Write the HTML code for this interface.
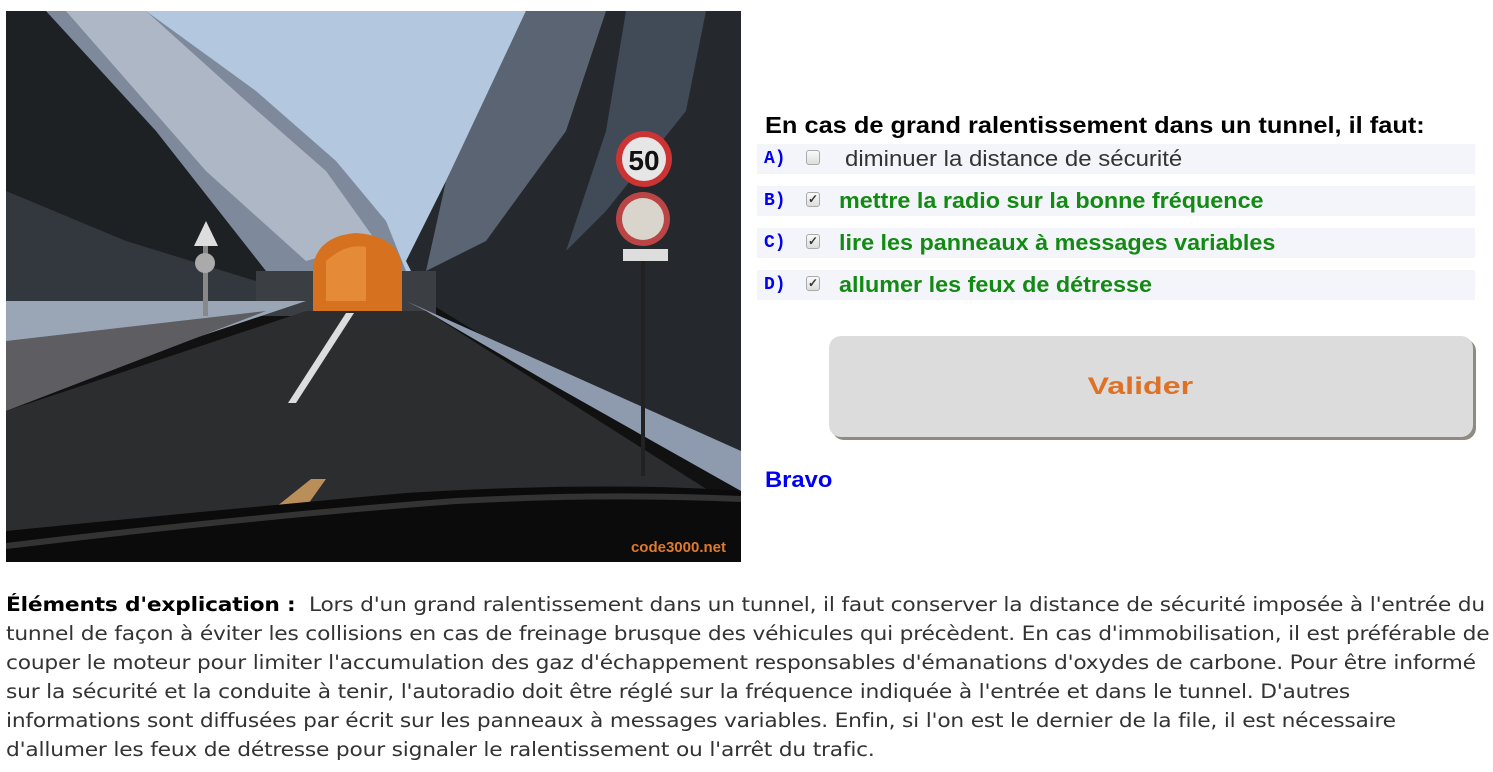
<!DOCTYPE html>
<html><head><meta charset="utf-8"><style>
body{margin:0;background:#fff;width:1493px;height:772px;position:relative;overflow:hidden;font-family:"DejaVu Sans Condensed","Liberation Sans",sans-serif}
.pic{position:absolute;left:6px;top:11px;width:735px;height:551px}
.sx{display:inline-block;transform-origin:left center}
.q{position:absolute;left:765px;top:112px;font:bold 23px "Liberation Sans",sans-serif;color:#000;white-space:nowrap}
.q .sx{transform:scaleX(1.103)}
.row{position:absolute;left:757px;width:718px;height:30px;background:#f4f5fa}
.lab{position:absolute;left:7px;top:5px;font:bold 18px "Liberation Mono",monospace;color:#0000ee}
.cb{position:absolute;left:49px;top:6px;width:14px;height:15px;border:1px solid #aaa;border-radius:3px;background:linear-gradient(#fafafa,#ddd);box-sizing:border-box;font:bold 12px sans-serif;color:#333;line-height:13px;text-align:center}
.t{position:absolute;left:82px;top:2px;font:bold 22px "Liberation Sans",sans-serif;color:#138a13;white-space:nowrap;transform:scaleX(1.062);transform-origin:left center}
.ta{left:88px;font-weight:normal;color:#333;transform:scaleX(1.09)}
.btn{position:absolute;left:829px;top:336px;width:622px;padding-right:22px;height:101px;background:#dcdcdc;border-radius:12px;box-shadow:3px 3px 0 #8f8a82;text-align:center;font:bold 24px/101px "Liberation Sans",sans-serif;color:#df7125}
.btn .sx{transform:scaleX(1.34);transform-origin:center}
.bravo{position:absolute;left:765px;top:467px;font:bold 22px "Liberation Sans",sans-serif;color:#0000f0;transform:scaleX(1.08);transform-origin:left}
.exp{position:absolute;left:6px;top:590px;width:1200px;font-size:19.3px;line-height:29px;color:#333;white-space:nowrap;letter-spacing:-0.15px;transform:scaleX(1.252);transform-origin:left top}
.exp b{color:#000}
</style></head><body>
<svg class="pic" viewBox="0 0 735 551" preserveAspectRatio="none">
<rect width="735" height="551" fill="#111"/>
<rect x="60" y="0" width="500" height="260" fill="#b3c7df"/>
<polygon points="30,0 140,0 250,80 330,150 380,210 400,260 250,280 150,200" fill="#7e8a9b"/>
<polygon points="60,0 140,0 240,90 320,160 370,230 300,250 200,160" fill="#aeb7c5"/>
<polygon points="0,0 40,0 150,120 260,260 250,300 0,300" fill="#1e2124"/>
<polygon points="0,180 120,230 250,270 250,300 0,300" fill="#33383f"/>
<polygon points="520,0 735,0 735,470 600,400 420,290 400,250 450,150" fill="#25282c"/>
<polygon points="520,0 600,0 560,120 480,230 420,260 440,170" fill="#5a6473"/>
<polygon points="620,0 700,0 680,100 600,200 560,240 600,120" fill="#414a57"/>
<rect x="250" y="260" width="180" height="45" fill="#3b3e43"/>
<path d="M307,300 V255 Q312,225 350,222 Q392,225 396,255 V300 Z" fill="#d5711f"/>
<path d="M320,290 V250 Q340,232 360,236 V290Z" fill="#e58a37"/>
<polygon points="0,290 300,290 150,340 0,360" fill="#9aa6b6"/>
<polygon points="0,330 260,300 0,400" fill="#5d5d62"/>
<polygon points="400,290 735,440 735,480 540,370 420,300" fill="#8e9bae"/>
<polygon points="0,400 300,300 420,300 735,500 735,551 0,551" fill="#2c2d2f"/>
<polygon points="340,302 348,302 290,392 282,392" fill="#ddd"/>
<polygon points="305,468 320,468 290,510 240,520" fill="#b98e58"/>
<path d="M0,560 L0,520 Q200,500 400,482 Q600,470 735,480 V551Z" fill="#0b0b0c"/>
<path d="M0,535 Q250,505 450,490 Q600,482 735,488" stroke="#333" stroke-width="6" fill="none"/>
<circle cx="638" cy="148" r="28" fill="#c33"/><circle cx="638" cy="148" r="22" fill="#e6e6e6"/>
<text x="638" y="159" font-family="Liberation Sans" font-weight="bold" font-size="28" text-anchor="middle" fill="#111">50</text>
<circle cx="637" cy="208" r="27" fill="#b44"/><circle cx="637" cy="208" r="21" fill="#d9d4cc"/>
<rect x="617" y="238" width="45" height="12" fill="#ddd"/>
<rect x="635" y="250" width="4" height="215" fill="#222"/>
<polygon points="200,210 212,235 188,235" fill="#ddd"/><rect x="197" y="235" width="5" height="70" fill="#888"/><circle cx="199" cy="252" r="10" fill="#aaa"/>
<text x="720" y="541" font-family="Liberation Sans" font-weight="bold" font-size="15" text-anchor="end" fill="#e07a2a">code3000.net</text>
</svg>
<div class="q"><span class="sx">En cas de grand ralentissement dans un tunnel, il faut:</span></div>
<div class="row" style="top:144px"><span class="lab">A)</span><span class="cb"></span><span class="t ta">diminuer la distance de sécurité</span></div>
<div class="row" style="top:186px"><span class="lab">B)</span><span class="cb">✓</span><span class="t">mettre la radio sur la bonne fréquence</span></div>
<div class="row" style="top:228px"><span class="lab">C)</span><span class="cb">✓</span><span class="t">lire les panneaux à messages variables</span></div>
<div class="row" style="top:270px"><span class="lab">D)</span><span class="cb">✓</span><span class="t">allumer les feux de détresse</span></div>
<div class="btn"><span class="sx">Valider</span></div>
<div class="bravo">Bravo</div>
<div class="exp"><b>Éléments d'explication :</b>&nbsp; Lors d'un grand ralentissement dans un tunnel, il faut conserver la distance de sécurité imposée à l'entrée du<br>tunnel de façon à éviter les collisions en cas de freinage brusque des véhicules qui précèdent. En cas d'immobilisation, il est préférable de<br>couper le moteur pour limiter l'accumulation des gaz d'échappement responsables d'émanations d'oxydes de carbone. Pour être informé<br>sur la sécurité et la conduite à tenir, l'autoradio doit être réglé sur la fréquence indiquée à l'entrée et dans le tunnel. D'autres<br>informations sont diffusées par écrit sur les panneaux à messages variables. Enfin, si l'on est le dernier de la file, il est nécessaire<br>d'allumer les feux de détresse pour signaler le ralentissement ou l'arrêt du trafic.</div>
</body></html>
